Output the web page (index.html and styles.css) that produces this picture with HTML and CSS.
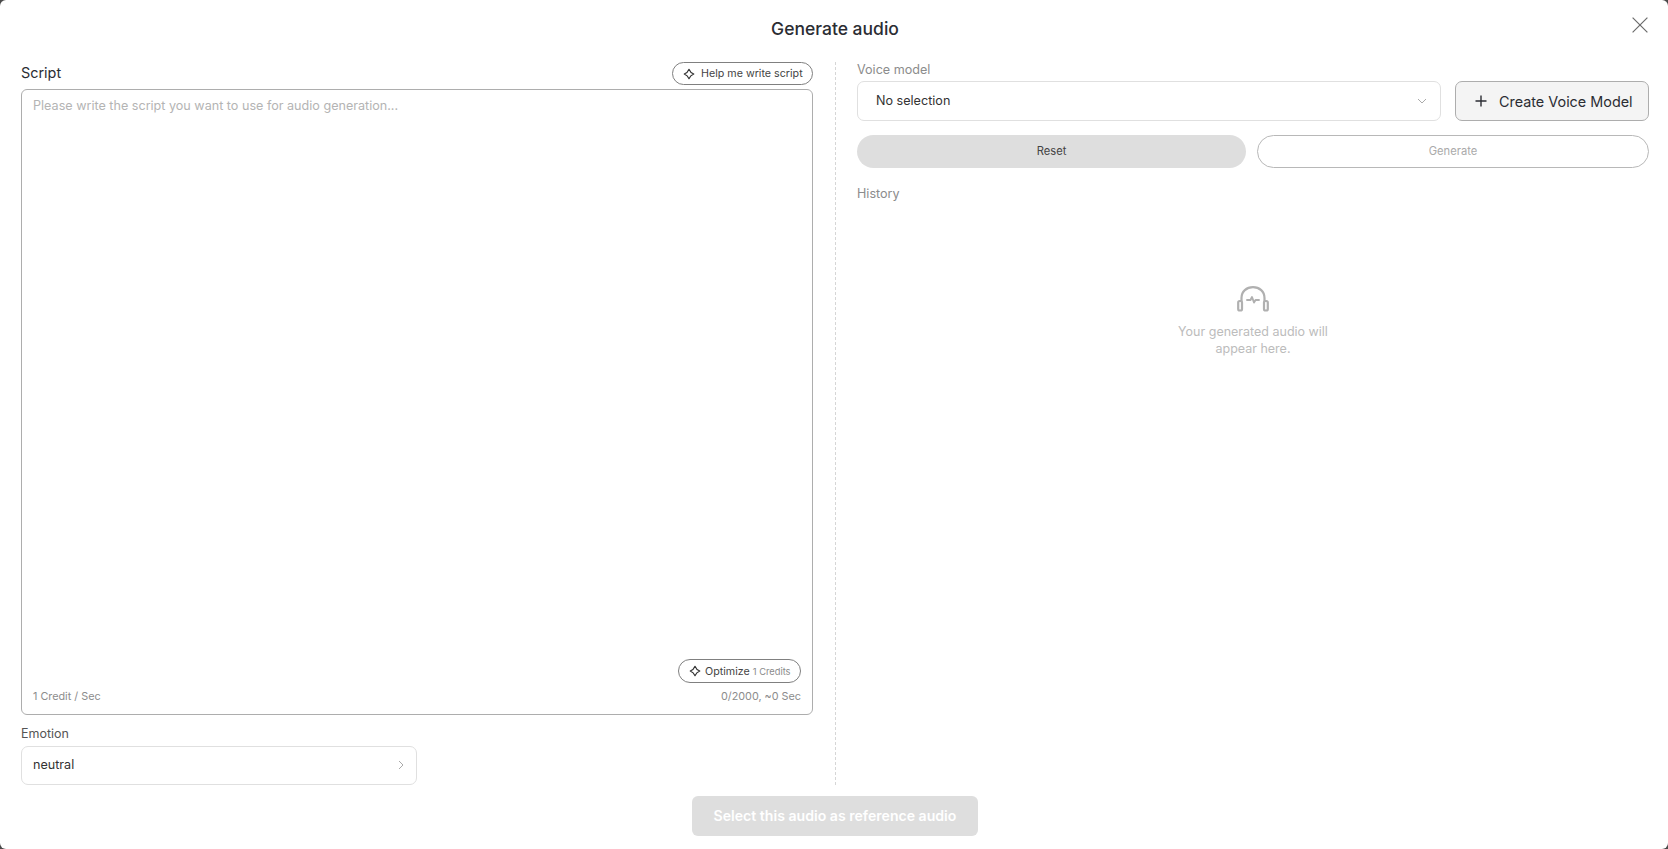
FILE: index.html
```html
<!DOCTYPE html>
<html lang="en">
<head>
<meta charset="utf-8">
<title>Generate audio</title>
<link rel="stylesheet" href="styles.css">
</head>
<body>
<div class="modal">
  <header class="modal-head">
    <h1 class="modal-title">Generate audio</h1>
    <button class="close" aria-label="Close">
      <svg width="16" height="16" viewBox="0 0 16 16" fill="none" stroke="#6b6b6b" stroke-width="1.2"><path d="M.6.6l14.8 14.8M15.4.6L.6 15.400"/></svg>
    </button>
  </header>
  <main class="columns">
    <section class="left">
      <div class="script-head">
        <span class="script-label">Script</span>
        <button class="pill help">
          <svg class="spark" width="12" height="12" viewBox="0 0 12 12" fill="none" stroke="#333" stroke-width="1.100" stroke-linejoin="round"><path d="M6 1.200C6.800 3.400 8.600 5.200 10.800 6 8.600 6.800 6.800 8.600 6 10.800 5.200 8.600 3.400 6.800 1.200 6 3.400 5.200 5.200 3.400 6 1.200z"/></svg>
          Help me write script
        </button>
      </div>
      <div class="script-box">
        <p class="placeholder">Please write the script you want to use for audio generation...</p>
        <div class="box-foot">
          <button class="pill optimize">
            <svg class="spark" width="12" height="12" viewBox="0 0 12 12" fill="none" stroke="#333" stroke-width="1.100" stroke-linejoin="round"><path d="M6 1.200C6.800 3.400 8.600 5.200 10.800 6 8.600 6.800 6.800 8.600 6 10.800 5.200 8.600 3.400 6.800 1.200 6 3.400 5.200 5.200 3.400 6 1.200z"/></svg>
            Optimize <small class="credits">1 Credits</small>
          </button>
          <div class="meta">
            <span>1 Credit / Sec</span>
            <span>0/2000, ~0 Sec</span>
          </div>
        </div>
      </div>
      <div class="emotion-label">Emotion</div>
      <div class="emotion-select">
        <span>neutral</span>
        <svg width="6" height="10" viewBox="0 0 6 10" fill="none" stroke="#aaa" stroke-width="1"><path d="M1 1l4 4-4 4"/></svg>
      </div>
    </section>
    <div class="divider"></div>
    <section class="right">
      <div class="voice-label">Voice model</div>
      <div class="voice-row">
        <div class="voice-select">
          <span>No selection</span>
          <svg width="10" height="6" viewBox="0 0 10 6" fill="none" stroke="#aaa" stroke-width="1"><path d="M1 1l4 4 4-4"/></svg>
        </div>
        <button class="create">
          <svg width="12" height="12" viewBox="0 0 12 12" fill="none" stroke="#2b2d33" stroke-width="1.400"><path d="M6 .5v11M.5 6h11"/></svg>
          Create Voice Model
        </button>
      </div>
      <div class="action-row">
        <button class="reset">Reset</button>
        <button class="generate">Generate</button>
      </div>
      <div class="history-label">History</div>
      <div class="empty">
        <svg width="32" height="26" viewBox="0 0 32 26" fill="none" stroke="#b0b0b0" stroke-width="2.200" stroke-linecap="round" stroke-linejoin="round">
          <path d="M4.500 15V12C4.500 5.500 9.500 1.200 16 1.200s11.500 4.300 11.500 10.800v3"/>
          <rect x="1.200" y="15" width="3.800" height="9.500" rx="1.500"/>
          <rect x="27" y="15" width="3.800" height="9.500" rx="1.500"/>
          <path stroke-width="1.900" d="M10 14h3.500l1.500-3 2 5.500 1.500-2.500H22"/>
        </svg>
        <p class="empty-text">Your generated audio will<br>appear here.</p>
      </div>
    </section>
  </main>
  <footer class="modal-foot">
    <button class="select-audio">Select this audio as reference audio</button>
  </footer>
</div>
</body>
</html>
```
FILE: styles.css
```css
* { box-sizing: border-box; }
html, body { margin: 0; height: 100%; background: #4a4a4a; }
body { font-family: Inter, "Liberation Sans", sans-serif; color: #2b2d33; overflow: hidden; }
button { font-family: inherit; cursor: pointer; }
p { margin: 0; }

.modal { width: 1668px; height: 849px; background: #fff; border-radius: 6px; display: flex; flex-direction: column; padding: 0 19px 0 21px; }

.modal-head { height: 62px; flex: none; display: flex; justify-content: center; position: relative; }
.modal-title { margin: 18px 0 0; font-size: 17.500px; line-height: 22px; font-weight: 500; color: #2b2d33; }
.close { position: absolute; right: 1px; top: 17px; padding: 0; width: 16px; height: 16px; border: 0; background: none; display: flex; }

.columns { height: 723px; flex: none; display: flex; }

.left { width: 792px; flex: none; display: flex; flex-direction: column; }
.script-head { height: 27px; flex: none; display: flex; justify-content: space-between; align-items: flex-start; }
.script-label { font-size: 14.400px; line-height: 22px; color: #2b2d33; }

.pill { display: flex; align-items: center; background: #fff; border: 1px solid #808080; border-radius: 12px; color: #444; padding: 0; font-size: 10.700px; white-space: nowrap; }
.spark { flex: none; }
.help { height: 23px; width: 141px; padding-left: 10px; gap: 6px; }

.script-box { height: 626px; flex: none; border: 1px solid #adadad; border-radius: 6px; padding: 7px 11px 9px; display: flex; flex-direction: column; justify-content: space-between; }
.placeholder { font-size: 12.600px; line-height: 18px; color: #b4b4b4; }
.box-foot { display: flex; flex-direction: column; align-items: flex-end; gap: 6px; }
.optimize { height: 24px; width: 123px; padding-left: 10px; gap: 4px; }
.credits { font-size: 9.300px; color: #8a8a8a; margin-left: -1px; }
.meta { width: 100%; display: flex; justify-content: space-between; font-size: 10.800px; line-height: 16px; color: #8c8c8c; }

.emotion-label { margin-top: 10px; font-size: 12.500px; line-height: 18px; color: #555; }
.emotion-select { margin-top: 3px; width: 396px; height: 39px; border: 1px solid #e0e0e0; border-radius: 7px; display: flex; align-items: center; justify-content: space-between; padding: 0 12px 2px 11px; font-size: 12.600px; color: #333; }

.divider { width: 0; flex: none; margin: 0 21px 0 22px; border-left: 1px dashed #d6d6d6; }

.right { flex: 1; min-width: 0; display: flex; flex-direction: column; }
.voice-label { font-size: 12.600px; line-height: 16px; color: #8c8c8c; margin-top: 0; }
.voice-row { display: flex; gap: 14px; margin-top: 3px; }
.voice-select { flex: 1; height: 40px; border: 1px solid #e0e0e0; border-radius: 7px; display: flex; align-items: center; justify-content: space-between; padding: 0 13px 1px 18px; font-size: 12.600px; color: #333; }
.create { flex: none; width: 194px; height: 40px; background: #f4f4f4; border: 1px solid #adadad; border-radius: 7px; display: flex; align-items: center; gap: 12px; padding: 0 0 0 19px; font-size: 14.400px; color: #2b2d33; white-space: nowrap; }

.action-row { display: flex; gap: 11px; margin-top: 14px; }
.reset { width: 389px; height: 33px; border: 0; border-radius: 17px; background: #dedede; font-size: 11.200px; color: #444; padding: 0 0 1px; }
.generate { flex: 1; height: 33px; border: 1px solid #b8b8b8; border-radius: 17px; background: #fff; font-size: 11.200px; color: #aaa; padding: 0 0 1px; }

.history-label { margin-top: 18px; font-size: 12.600px; line-height: 16px; color: #8c8c8c; }

.empty { margin-top: 84px; display: flex; flex-direction: column; align-items: center; gap: 11px; }
.empty-text { font-size: 12.500px; line-height: 17px; color: #bcbcbc; text-align: center; }

.modal-foot { flex: 1; display: flex; justify-content: center; align-items: flex-start; padding-top: 11px; }
.select-audio { width: 286px; height: 40px; border: 0; border-radius: 6px; background: #dedede; color: #fff; font-size: 14.100px; font-weight: 600; white-space: nowrap; padding: 0 0 1px; }
```
